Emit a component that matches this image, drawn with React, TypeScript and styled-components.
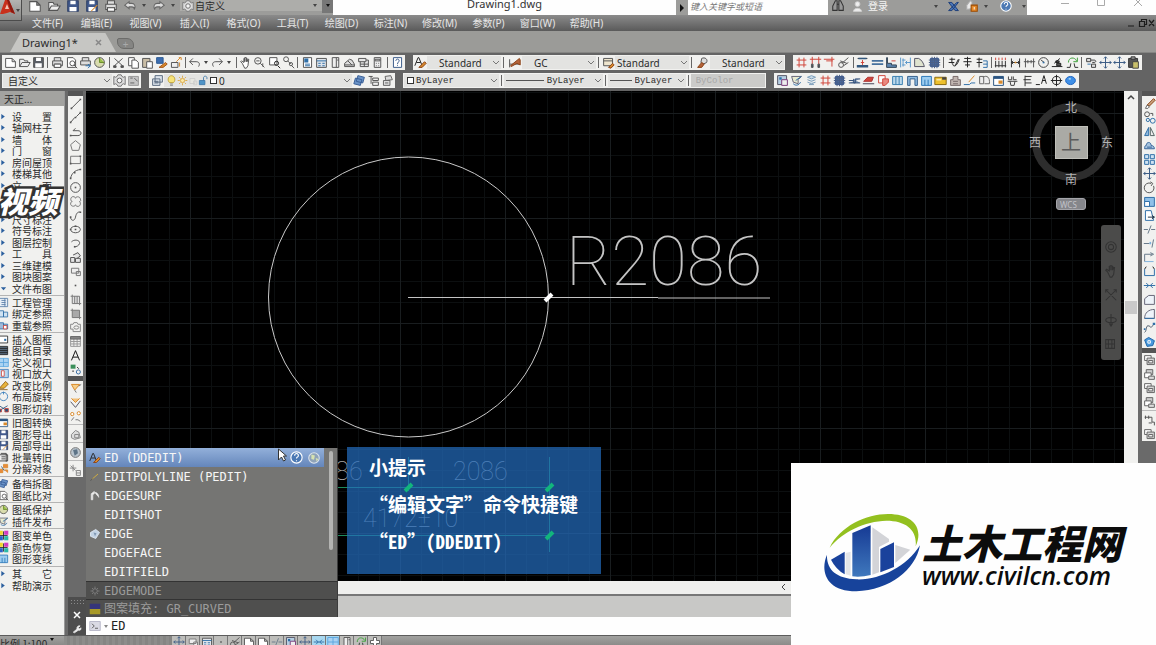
import React from "react";
import styled, { createGlobalStyle, css } from "styled-components";

const UI = `"Noto Sans", "Noto Sans CJK SC", sans-serif`;
const CJK = `"Noto Sans CJK SC", "Noto Sans", sans-serif`;
const MONO = `"Noto Sans Mono CJK SC", "Noto Sans CJK SC", monospace`;
const CODE = `"DejaVu Sans Mono", "Noto Sans CJK SC", monospace`;

const Global = createGlobalStyle`
  * { box-sizing: border-box; }
  html, body { margin: 0; background: #646464; }
  body { font-family: ${UI}; color: #2b2b2b; overflow: hidden; }
  button, input, select { font: inherit; color: inherit; border: 0; padding: 0; margin: 0; background: none; border-radius: 0; }
  ul { list-style: none; margin: 0; padding: 0; }
`;

/* ---------- icons: [path, stroke, fill] on a 16 x 16 grid ---------- */

type Shape = [string, string, string?];
const K = "#555";
const B = "#2f6fa8";
const L = "#7fb2dc";
const R = "#d0453a";
const O = "#d98a2b";
const N = "none";

const icons: Record<string, Shape[]> = {
  new: [["M2 3h8l4 4v7H2zM10 3v4h4", K, "#fff"]],
  open: [["M2 13V4h5l1 2h4v2M2 13l3-5h10l-3 5z", K, "#eee"]],
  save: [["M2 2h12v12H2z", K, "#5b5f66"], ["M5 2h6v4H5zM4 9h8v5H4z", N, "#fff"]],
  saveBlue: [["M2 2h12v12H2z", "#2d3f66", "#41598c"], ["M5 2h6v4H5zM4 9h8v5H4z", N, "#fff"]],
  saveAs: [["M2 2h12v12H2z", "#2d3f66", "#41598c"], ["M5 2h6v4H5zM4 9h8v5H4z", N, "#fff"], ["M7 14l7-7", O]],
  print: [["M4 6V2h8v4M2 6h12v6H2zM4 10h8v4H4z", K, "#ddd"], ["M4 10h8v4H4z", K, "#fff"]],
  preview: [["M3 2h7l3 3v9H3z", K, "#fff"], ["M6 9a3 3 0 1 0 6 0a3 3 0 1 0-6 0M11 11l4 4", K]],
  publish: [["M4 6V2h8v4M2 6h12v5H2z", K, "#ddd"], ["M8 12h6M11 10l3 2-3 3", B]],
  globe: [["M2 8a6 6 0 1 0 12 0a6 6 0 1 0-12 0", K, "#d9dcae"], ["M8 2v6h6", "#6c8f2c", "#9abf4a"]],
  cut: [["M3 3l10 9M13 3L3 12", K], ["M2 12h3v2H2zM11 12h3v2h-3z", K, K]],
  copy: [["M2 2h7v10H2z", K, "#fff"], ["M6 5h5l3 3v7H6z", K, "#fff"]],
  paste: [["M2 3h9v11H2z", K, "#c9bda5"], ["M7 7h7v8H7z", K, "#fff"]],
  pasteBlack: [["M2 3h11v11H2z", "#333", "#555"], ["M5 1h5v3H5z", "#333", "#999"], ["M7 7h7v8H7z", "#444", "#c9c06a"]],
  match: [["M2 2h8v7H2z", "#2d5a94", "#3c6db0"], ["M5 14l8-6 2 2-5 4z", "#a4561e", O]],
  block: [["M3 8h8v6H3z", K, "#eee"], ["M9 7l5-5M12 2h3v3M13 8v5", O]],
  undo: [["M6 3L2 7l4 4M2 7h8c4 0 5 3 3 6", K]],
  redo: [["M10 3l4 4-4 4M14 7H6c-4 0-5 3-3 6", K]],
  undoTop: [["M7 3L2 7l5 4V9h3c2 0 3 1 3 3c2-4 0-7-3-7H7z", "#666", "#ddd"]],
  redoTop: [["M9 3l5 4-5 4V9H6c-2 0-3 1-3 3C1 8 3 5 6 5h3z", "#666", "#ddd"]],
  hand: [["M4 9L2 7l1-1 3 2V3h1v4V2h2v5-4h1v4l1-3h1l-1 8-2 3H7z", K, "#fff"]],
  zoom: [["M2 6a4 4 0 1 0 8 0a4 4 0 1 0-8 0M9 9l5 5M4 6h4M12 9v4", K]],
  zoomWin: [["M2 2h9v9H2z", K, "#fff"], ["M8 9a2 2 0 1 0 5 0a2 2 0 1 0-5 0M12 12l3 3", "#222"]],
  zoomPrev: [["M2 4a3 3 0 1 0 6 0a3 3 0 1 0-6 0M7 6l4 4M9 10a2 2 0 1 0 4 0a2 2 0 1 0-4 0M12 12l3 3", K]],
  props: [["M3 2h10v12H3z", K, "#fff"], ["M4 3h5v5H4z", N, B], ["M5 10h6M5 12h6", B]],
  center: [["M2 3h12v11H2z", K, "#dfe4ea"], ["M2 6h12M4 9h3M9 9h3M4 12h3M9 12h3", B]],
  palette: [["M4 2h8v12H4zM9 2v12M10 5h2", K, "#eee"]],
  sheet: [["M2 9l6-5 3 1 3 5v3H2zM2 11h12M6 6l5 5", K, "#ddd"]],
  markup: [["M2 3h9v4H2zM4 7v6h10V5h-3M4 10h10M9 7v6", K, "#e6e6e6"]],
  calc: [["M4 2h8v12H4z", K, "#eee"], ["M5 4h6v2H5zM6 9h1M9 9h1M6 12h1M9 12h1", K]],
  help: [["M3 2h10v12H3z", "#3b5c8a", "#fff"], ["M6 6c0-3 4-3 4 0c0 2-2 1-2 4M8 11v1", "#3b5c8a"]],
  textStyle: [["M1 12L5 2h1l4 10M3 8h5", "#222"], ["M6 14l7-7 2 2-5 5z", "#8a4318", O]],
  dimStyle: [["M2 4v10M2 10h12", K], ["M3 12L14 3l1 2v6l-4-2-7 4z", "#8a4318", "#b5633a"]],
  tableStyle: [["M2 3h11v9H2zM2 6h11", K, "#efe6cf"], ["M8 14l5-5 2 2-4 4z", "#8a4318", O]],
  leader: [["M7 3c4-2 8 1 6 5l-4 2-3-2z", K, "#ddd"], ["M2 14l5-6 3 2-3 4z", "#8a4318", "#b5633a"]],
  gear: [["M6 1h4l1 2 2 1 2-1v10l-2-1-2 1-1 2H6l-1-2-2-1-2 1V3l2 1 2-1z", "#777", "#ddd"], ["M5 8a3 3 0 1 0 6 0a3 3 0 1 0-6 0", "#666", "#f4f4f4"]],
  save2: [["M2 3h12v11H2z", "#999", "#c6c6c6"], ["M4 5h3M9 5l4 4M4 11h5", "#666"]],
  layers: [["M5 2h9v8H5zM2 6h9v8H2zM4 9h5M4 11h5", "#5a6b80", "#dbe3ec"]],
  layersB: [["M6 2l8 2-2 7-8-2zM3 5l8 2-2 7-8-2z", "#3a5f96", "#6a93c7"]],
  layerPrev: [["M2 3h5M5 3v9M7 5h7v3H7zM7 10h7v4H7z", K, "#eee"]],
  layerState: [["M5 3l7-1 2 5-8 1zM3 8h8v6H3zM5 11h4", "#666", "#ddd"]],
  bulb: [["M5 11C1 7 4 1 8 1s7 6 3 10z", "#b99a2a", "#f6e27a"], ["M6 13h4M6 15h4", "#777"]],
  sun: [["M5 8a3 3 0 1 0 6 0a3 3 0 1 0-6 0M8 1v3M8 12v3M1 8h3M12 8h3M3 3l2 2M11 11l2 2M13 3l-2 2M3 13l2-2", "#d9a233", "#fbe9a8"]],
  sunPage: [["M3 4h8v8H3zM9 8h5v6H9z", "#c9c9c9", "#e6e6e0"]],
  lock: [["M2 8h8v6H2z", "#3a76a8", "#4f94c7"], ["M8 8V4c0-3 5-3 5 0v2", "#3a76a8"]],
  grid: [["M5 2v12M11 2v12M2 5h12M2 11h12", R]],
  columns: [["M1 4h14M4 1v9M12 1v9", R], ["M3 10h2v4H3zM11 10h2v4h-2z", K, "#456"]],
  axisT: [["M1 4h13M11 1v12M4 6h8", R]],
  link: [["M2 11a3 3 0 1 0 6 0a3 3 0 1 0-6 0M6 9l8-7M8 12l6-4M4 6l8 3", K]],
  wallI: [["M2 3h12", "#333"], ["M8 5v6M6 8h4", R], ["M1 11h14v3H1zM3 2h10v2H3z", N, "#33587e"]],
  wallE: [["M1 5h14v2H1zM1 9h14v2H1z", N, "#46719e"]],
  stairs: [["M3 2v7h5v2h6v3H2V2z", "#345", "#5d86b0"], ["M8 6h5", R]],
  door: [["M2 2v12M14 2v12M4 5h4M4 11h4M8 8h6M10 6L8 8l2 2M5 3v10", "#5b98ca"]],
  arc: [["M2 13V3h5c4 2 6 6 7 10z", "#556", "#dfe3cf"]],
  hatchSq: [["M3 3h10v10H3z", "#34558f", "#46679c"], ["M5 1v14M8 1v14M11 1v14M1 5h14M1 8h14M1 11h14", "#4a5f86"]],
  dimA: [["M3 4h7M6 2v7M2 8h7M7 9c0 5 5 5 8-5M10 12l4-8", "#222"]],
  dimB: [["M4 3h8M8 1v13M3 7h10M5 11h6", "#222"]],
  dimC: [["M2 4h7M5 2v12M2 8h7", "#222"], ["M10 6h5v8h-5M10 10h5", B]],
  dimV: [["M2 6v8M6 6v8M10 6v8M14 6v8M1 12h14", "#333"], ["M2 2v3M6 2v3M10 2v3M14 2v3", R]],
  dimH: [["M3 3v11M13 3v11M3 8h10M5 6L3 8l2 2M11 6l2 2-2 2", "#333"], ["M7 7h2v2H7z", N, O]],
  dimG: [["M3 3v11M13 3v11M1 7h14M6 5v4M10 5v4", "#555"]],
  radius: [["M2 8a6 6 0 1 0 12 0a6 6 0 1 0-12 0M5 5l4 3", "#444"], ["M7 7h2v2H7z", N, B]],
  levelMk: [["M1 13h13M4 9l7-6M6 6h4v2H6zM7 9h5v3H7z", "#222", "#555"]],
  section: [["M1 14h4L6 9M15 14h-4l-1-5", "#333"], ["M3 8c0-7 8-7 10-2M14 2v5h-5", "#3ea03a"]],
  gears: [["M2 3h5v4H2zM7 5h4c3 0 3 3 0 3H9M8 10h5v4H8z", "#444", "#ddd"], ["M3 10h4", B]],
  cross: [["M8 1v14M1 8h14M6 3l2-2 2 2M6 13l2 2 2-2M3 6L1 8l2 2M13 6l2 2-2 2", "#3a5a84"]],
  img: [["M2 2h11v11H2z", "#556", "#b7cfe2"], ["M7 7h7v7H7z", "#7a3a7a", "#eee"], ["M4 4h3v3H4z", N, B]],
  edit: [["M2 3h12l-4 4v5l-6-2z", "#667", "#e8ead0"], ["M4 12c3 3 7 2 9-2M7 8l7-5", B]],
  cubes: [["M3 4l5-2 5 2-5 2zM3 7l5 2 5-2M3 10l5 2 5-2M5 13h6", "#7b9dba", "#c9dbe8"]],
  wallH: [["M1 8h6M1 11h8V6h6M7 6v5h8", "#33507a", "#7f97b5"]],
  redCar: [["M3 8l4-4h7l-2 5H2z", "#a33", R], ["M1 12h14", "#445", R]],
  redDoor: [["M2 2h8v9H2z", R, "#fff"], ["M7 6h7v4l-4 4H7z", R, "#e98a80"]],
  blueWin: [["M2 3h12v10H2zM6 3v10M10 3v10", "#3a7fb0", "#bcd9ec"]],
  blueN: [["M2 14V3h12v11h-3V6H5v8z", "#36608c", "#8fbbe0"]],
  blueM: [["M2 14V3h12v11zM6 7v7M10 7v7", "#2d78b8", "#9dcdf0"]],
  folder: [["M1 4h14v9H1z", "#8a6a10", "#edc02c"], ["M3 6h6v2H3z", N, "#fbe9a8"], ["M10 4h5v3h-5z", N, "#444"]],
  house: [["M2 14V7h3V3h6v4h3v7zM5 9h6M5 12h6", "#776a6a", "#c2b7b2"]],
  line: [["M3 14L14 3", K], ["M2 13h2v2H2zM13 2h2v2h-2z", N, K]],
  blueLine: [["M1 13h7l2-2h5", "#2f6fa8"], ["M7 10l7-8", O]],
  pages: [["M2 3h5v9H2zM6 4c5-3 9 0 8 8H8", "#666", "#eee"]],
  table: [["M2 3h12v11H2z", "#28527f", "#fff"], ["M2 3h12v3H2z", N, "#28527f"], ["M8 8h5v4H8z", N, O]],
  text2: [["M3 3v4h4V3M9 3v4h4M2 9h12M5 9l1 5h4l1-5", "#444"]],
  flagE: [["M5 2v13M5 3h8M3 7h9M5 11h8", "#333"]],
  triA: [["M1 13h5M8 12l3-10 3 10M9 8h4", "#222"]],
  target: [["M3 8a5 5 0 1 0 10 0a5 5 0 1 0-10 0M8 1v14M1 8h14", "#222"]],
  ball: [["M2 8a6 5 0 1 0 12 0a6 5 0 1 0-12 0", "#1f66c0", "#3f8fe6"], ["M5 6l3-1v2z", N, "#dff"]],
  cline: [["M2 14l5-6M9 7l5-5", K], ["M1 13h2v2H1zM7 7h2v2H7zM13 1h2v2h-2z", N, K]],
  pline: [["M2 13h9c5 0 5-6 0-6H5M8 4L5 7", K], ["M1 12h2v2H1z", N, K]],
  pentagon: [["M8 2l6 5-2 7H4L2 7z", "#777"]],
  rect: [["M2 4h12v9H2z", "#777"], ["M1 12h2v2H1zM13 3h2v2h-2z", N, K]],
  arcLine: [["M2 14C3 8 7 4 14 3", K], ["M1 13h2v2H1zM6 6h2v2H6zM13 2h2v2h-2z", N, K]],
  circle: [["M2 8a6 6 0 1 0 12 0a6 6 0 1 0-12 0", K], ["M7 7h2v2H7z", N, K]],
  cloud: [["M8 4c1-3 6-2 6 1c1 2 0 3-1 3c2 2 1 6-2 6c-2 0-3-1-3-2c-1 3-6 2-6-1c0-2 1-3 2-3c-3-1-2-6 1-6c2 0 3 1 3 2z", "#777"]],
  spline: [["M2 11c1 4 5 4 6-1s3-7 6-6", K], ["M1 9h2v2H1zM13 3h2v2h-2z", N, K]],
  ellipse: [["M2 8a6 4 0 1 0 12 0a6 4 0 1 0-12 0", K], ["M7 7h2v2H7zM1 7h2v2H1zM7 3h2v2H7z", N, K]],
  ellArc: [["M3 6c4-4 11-2 10 2c-1 3-4 4-6 4", K], ["M6 11h2v2H6z", N, K]],
  insert: [["M2 8h5v6H2zM5 5l6-3 3 4-4 3M8 9h6v5H8z", K, "#e4e4e4"]],
  makeBlk: [["M3 4h9v6H3zM9 8h5v5H9z", "#777", "#eee"]],
  dot: [["M7 7h2v2H7z", N, K]],
  hatch: [["M4 4h9v9H4z", "#777", "#e2e2e2"], ["M2 4h2M4 2v2M13 13h2M13 13v2M7 4v9M10 4v9", "#777"]],
  gradient: [["M4 4h9v9H4z", "#777", "#a9a9a9"], ["M2 4h2M4 2v2M13 13h2M13 13v2", "#777"]],
  region: [["M2 4h3l1-2h4l1 2h3v9H5v-3H2zM6 8a3 2 0 1 0 6 0a3 2 0 1 0-6 0", "#888"]],
  tbl: [["M2 2h12v12H2zM2 8h12M6 4v10M10 4v10M2 11h12", "#999"], ["M2 2h12v3H2z", "#666", "#888"]],
  bigA: [["M3 14L8 2l5 12M5 10h6", "#111"]],
  points: [["M2 2h6v5H2z", N, "#3b8f5a"], ["M9 11a2 2 0 1 0 5 0a2 2 0 1 0-5 0", "#3a6ea5"], ["M4 10h2M10 5l2 2", "#222"]],
  lampA: [["M3 3h10L7 10z", O, "#f6cf8a"], ["M7 10l2 3M12 5l3-2", "#777"]],
  lampB: [["M3 3l5 5 5-5", O, "#f2c079"], ["M2 7l6 7 6-8", "#556"]],
  lampC: [["M2 5a2 2 0 1 0 4 0a2 2 0 1 0-4 0M10 4a2 2 0 1 0 4 0a2 2 0 1 0-4 0", O, "#fff"], ["M6 9l-3 4M8 12h3l3 2", "#777"]],
  greyBall: [["M3 8l5-5 4 2 2 7-7 2-4-2zM7 8h5v4H7z", "#888", "#ddd"]],
  world: [["M2 8a6 6 0 1 0 12 0a6 6 0 1 0-12 0", "#777", "#b9c4cd"], ["M5 5l5-1 1 5-4 3z", N, "#5d7487"]],
  sunBox: [["M5 1v8M1 5h8M2 2l6 6M9 8h5v6H9zM9 11h5", "#888"]],
  eraser: [["M5 10L13 2l2 2-7 7z", "#8a4318", "#c9a27c"], ["M5 10l3 2-2 2H3z", "#666", "#fff"]],
  copy2: [["M2 4a3 3 0 1 0 6 0a3 3 0 1 0-6 0M9 3h3v3", K], ["M4 11a2 2 0 1 0 4 0a2 2 0 1 0-4 0M9 12a3 3 0 1 0 6 0a3 3 0 1 0-6 0", B]],
  mirror: [["M7 3v10H2z", B, "#8db8de"], ["M9 3v10h5z", "#566", "#eee"]],
  offset: [["M2 12h12c0-3-2-4-4-4c0-5-6-5-6 0C2 8 2 10 2 12zM5 10h6", "#35659a", "#a4c2de"]],
  array: [["M2 2h5v5H2zM9 2h5v5H9zM2 9h5v5H2zM9 9h5v5H9z", B, "#cfe2f2"]],
  rotate: [["M10 3a6 6 0 1 0 3 3M9 1l3 2-2 3", K]],
  scale: [["M2 3h12v11H2z", B, "#8fc0e8"], ["M2 8h6v6H2z", B, "#fff"]],
  stretch: [["M3 2h7l3 12H3z", B, "#fff"], ["M6 10h8M11 8l3 2-3 2", "#234"]],
  trim: [["M1 8h5M10 8h5M6 13l4-10", "#678"]],
  extend: [["M1 8h7M11 13l2-10", "#678"], ["M8 6h2v3H8z", N, L]],
  brk: [["M2 13V4h9M9 2l4 2-4 2", "#678"], ["M2 13h11", L]],
  join: [["M2 5v8h12V5", B], ["M4 2l-2 3M12 2l2 3", "#222"]],
  joinH: [["M1 8h14M4 5l3 3-3 3M12 5L9 8l3 3", B]],
  chamfer: [["M2 14V7l5-4h7v11z", "#667", "#eef4fa"]],
  fillet: [["M2 14C2 7 7 3 14 3v11z", "#667", "#eef4fa"], ["M2 14h12", B]],
  blend: [["M2 14c3-2 1-9 5-8s1 5 7-3", "#456"], ["M1 9h2v2H1zM12 2h3v3h-3z", N, B]],
  explode: [["M2 6l5-3 7 4-2 6-7 1z", "#1f66a8", "#4a9ade"], ["M6 7h3v3H6z", "#fff"]],
  order: [["M2 2h8v6H2z", "#666", "#fff"], ["M5 5h9v8H5z", "#666", "#d6d6d6"], ["M7 8h5v3H7z", "#666", "#eee"]],
  order2: [["M4 2h8v6H4z", "#666", "#ccc"], ["M2 6h8v6H2z", "#666", "#fff"], ["M7 10h7v4H7z", "#666", "#ddd"]],
  orderT: [["M2 4h9M3 2v4M7 2v4M11 4v6h3v4M7 11h4", "#555"]],
  binoc: [["M2 13V8l3-6h2v11zM9 13V2h2l3 6v5zM7 6h2", "#333", "#999"]],
  user: [["M5 5a3 3 0 1 0 6 0a3 3 0 1 0-6 0M3 14c0-5 10-5 10 0z", "#ccc", "#eee"]],
  xmark: [["M2 3h4l8 10h-4zM12 3h2L6 13H2z", "#1e3f7a", "#4a76b8"]],
  handLock: [["M2 12V7l4-5 2 1v8z", "#aaa", "#e9e9e9"], ["M7 7h7v7H7z", "#9a4a00", "#e58a2a"], ["M10 9h1v3h-1z", N, "#fff"]],
  helpBlue: [["M2 8a6 6 0 1 0 12 0a6 6 0 1 0-12 0", "#fff", "#4c79b4"], ["M6 6c0-3 4-3 4 0c0 2-2 1-2 3M8 11v1", "#fff"]],
  globeList: [["M2 8a6 6 0 1 0 12 0a6 6 0 1 0-12 0", "#dde4ec", "#8fa3b8"], ["M5 4l4 1-1 5-3-1zM10 8l3 1-2 3z", N, "#d7e2b0"]],
  pencil: [["M4 11L12 4", "#d9b23a"], ["M2 13L5 10", "#555"]],
  surf: [["M3 13V5l4-3v3l-2 1v7zM7 3c4 0 6 3 6 7", "#ddd", "#f4f4f4"]],
  edge: [["M2 6l7-4 5 4-5 8-7-3z", "#dfe8f2", "#c3d3e4"], ["M6 6l4 1-2 4z", N, "#7f97b2"]],
  gearDark: [["M8 2v12M2 8h12M4 4l8 8M12 4l-8 8", "#7d7d7d"], ["M5 8a3 3 0 1 0 6 0a3 3 0 1 0-6 0", "#7d7d7d", "#4e4e4e"]],
  gradSw: [["M1 1h14v7H1z", N, "#35357a"], ["M1 8h14v7H1z", N, "#a89a28"]],
  prompt: [["M1 2h14v12H1z", "#b6b6c6", "#dadae4"], ["M4 5l3 3-3 3M8 11h4", "#555"]],
  wrench: [["M13 3a4 4 0 0 0-5 5l-6 5 2 1 6-4c4 1 5-2 4-4l-2 2-2-2z", "#eee", "#eee"]],
  navWheel: [["M2 8a6 6 0 1 0 12 0a6 6 0 1 0-12 0M5 8a3 3 0 1 0 6 0a3 3 0 1 0-6 0", "#333"]],
  navHand: [["M4 9L2 7l1-1 3 2V3h1v4V2h2v5-4h1v4l1-3h1l-1 8-2 3H7z", "#333"]],
  navZoom: [["M2 2l12 12M14 2L2 14M5 2H2v3M11 2h3v3", "#333"]],
  navOrbit: [["M2 8a6 3 0 1 0 12 0a6 3 0 1 0-12 0M8 1v14M6 12l2 3 2-3", "#333"]],
  navFilm: [["M2 3h10v10H2zM5 3v10M9 3v10M2 8h10", "#333"]],
  plus: [["M6 2h4v4h4v4h-4v4H6v-4H2V6h4z", "#555", "#fff"]],
  triList: [["M3 2l8 6-8 6z", N, "#2b5f9e"]],
  triDown: [["M2 5h12l-6 7z", N, "#2b5f9e"]],
  listA: [["M2 2h12v12H2zM5 5h6M5 8h6M5 11h6M10 2v12", "#557ba5", "#e6eef6"]],
  listB: [["M2 4h6v9H2zM8 6h6v7H8z", B, "#cfe2f2"]],
  listC: [["M2 4h6v9H2zM8 6h6v7H8z", B, "#9fb8d8"], ["M8 8h5v5H8z", R, "#fff"]],
  frame: [["M1 3h13v10H1z", "#222", "#fff"], ["M9 7h3v3H9z", N, B]],
  book: [["M1 2h13v12H1zM1 5h13M1 8h13M1 11h13", "#222", "#567"]],
  view: [["M1 2h14v12H1zM1 8h14M8 2v12", "#5aa5de", "#a9d2f2"]],
  viewR: [["M1 2h14v12H1z", "#3b78b8", "#b7d6ee"], ["M5 4h4v8H5z", R, "#fff"]],
  pen: [["M2 12l9-10 4 4-6 6zM1 14h13", "#8a5a10", "#e8b33a"]],
  ring: [["M2 8a6 6 0 1 0 12 0a6 6 0 1 0-12 0M8 1v4", "#2f78b8"]],
  scissors: [["M2 4l9 6M2 11l12-7", "#26517d"], ["M10 8h5v5h-5zM1 9h4v4H1z", R, "#26517d"]],
  stamp: [["M2 4h12v9H2zM4 2h8v12M5 7h6M5 10h6", "#333", "#eee"]],
  puzzle: [["M2 9h5v5H2zM8 2h6v5H8zM9 10h5v4", O, "#e98a3a"], ["M5 5l4 6", "#26517d"]],
  colors: [["M1 1h6v6H1z", N, "#f2d52a"], ["M9 1h6v6H9z", N, "#d23cc0"], ["M1 9h6v6H1z", N, "#2a62c8"], ["M9 9h6v6H9z", N, "#2ab8a8"], ["M8 2v12M2 8h12", "#222"]],
};

const Svg = styled.svg<{ $s: number }>`
  display: block;
  flex: none;
  width: ${(p) => p.$s}px;
  height: ${(p) => p.$s}px;
`;
const Icon = ({ n, s = 12 }: { n: string; s?: number }) => (
  <Svg $s={s} viewBox="0 0 16 16" aria-hidden="true">
    {icons[n].map(([d, stroke, fill], i) => (
      <path key={i} d={d} stroke={stroke} fill={fill ?? "none"} strokeWidth={1.2} />
    ))}
  </Svg>
);

/* ---------- frame ---------- */

const Page = styled.div`
  display: flex;
  flex-direction: column;
  height: 100vh;
  position: relative;
  overflow: hidden;
`;

const TitleBar = styled.header`
  display: flex;
  height: 15px;
  background: #fefefe;
`;
const AppSlot = styled.div`
  width: 22px;
  position: relative;
  background: #8d8d8b;
`;
const AppButton = styled.button`
  position: absolute;
  z-index: 2;
  top: 0;
  left: 0;
  width: 22px;
  height: 21px;
  display: flex;
  align-items: center;
  background: linear-gradient(#b4b4b2, #8a8a88);
  border-right: 1px solid #4c4c4c;
  border-bottom: 1px solid #4c4c4c;
`;
const Gray = styled.div<{ $w: number }>`
  display: flex;
  align-items: center;
  width: ${(p) => p.$w}px;
  background: #9c9c9a;
  overflow: hidden;
`;
const QuickAccess = styled(Gray)`
  padding-left: 3px;
  padding-bottom: 4px;
`;
const Tool = styled.button<{ $w?: number }>`
  display: flex;
  align-items: center;
  justify-content: center;
  height: 14px;
  min-width: 0;
  overflow: hidden;
  ${(p) => (p.$w ? css`width: ${p.$w}px; flex: none;` : css`flex: 1 1 0;`)}
`;
const Caret = styled.span<{ $c?: string }>`
  width: 0;
  border: 2px solid transparent;
  border-top: 3px solid ${(p) => p.$c ?? "#444"};
  border-bottom: 0;
`;
const Workspace = styled.label`
  flex: 1;
  display: flex;
  align-items: center;
  gap: 1px;
  height: 100%;
  margin-left: 2px;
  padding: 0 5px 0 2px;
  background: #adadaa;
  font: 10px/11px ${CJK};
  select { appearance: none; flex: 1; height: 12px; }
`;
const More = styled(Tool)`background: #777;`;
const FileName = styled.h1`
  flex: 1;
  margin: 0;
  text-align: center;
  font: 11px/7px ${UI};
  color: #333;
`;
const Search = styled.input`
  width: 140px;
  background: #fefefe;
  font: italic 9px/12px ${CJK};
  padding: 0 2px 2px;
  &::placeholder { color: #777; opacity: 1; }
`;
const Account = styled(Gray)`
  padding-bottom: 3px;
  color: #f4f4f4;
  font: 10px/12px ${CJK};
`;
const Sign = styled.button`
  width: 22px;
  margin-right: 40px;
  white-space: nowrap;
`;
const WinButtons = styled.div`
  display: flex;
  align-items: center;
  justify-content: space-around;
  width: 129px;
  padding: 0 0 8px 20px;
`;

const MenuBar = styled.nav`
  display: flex;
  align-items: center;
  height: 16px;
  padding: 0 1px 0 23px;
  background: linear-gradient(#8b8b8b, #5a5a5a);
  color: #e6e6e6;
  font: 10px/14px ${UI};
`;
const MenuItem = styled.button`
  width: 49px;
  text-align: center;
  white-space: nowrap;
  flex: none;
`;
const Push = styled.span`flex: 1;`;

const TabBar = styled.div`
  display: flex;
  align-items: flex-end;
  height: 22px;
  background: #9b9b98;
  padding-left: 8px;
  border-bottom: 1px solid #858583;
`;
const Tab = styled.div`
  position: relative;
  z-index: 0;
  display: flex;
  align-items: center;
  justify-content: space-between;
  width: 108px;
  height: 19px;
  padding: 0 14px;
  font: 11px/18px ${UI};
  &::before {
    content: "";
    position: absolute;
    z-index: -1;
    inset: 0 0 0 2px;
    border-radius: 7px 8px 0 0;
    background: #c6c6c3;
    clip-path: polygon(0 100%, 10% 0, 90% 0, 100% 100%);
  }
`;
const NewTab = styled.button`
  width: 17px;
  height: 11px;
  margin: 0 0 3px 1px;
  border: 1px solid #6c6c6a;
  border-radius: 2px 7px 2px 7px;
  background: #858583;
  color: #aaa;
  font: 10px/8px ${UI};
`;

const ToolArea = styled.div`
  background: #646464;
  padding: 2px 0 3px 2px;
  display: flex;
  flex-direction: column;
  gap: 3px;
`;
const ToolRow = styled.div`display: flex; gap: 8px;`;
const Bar = styled.div<{ $w: number }>`
  display: flex;
  align-items: center;
  flex: none;
  width: ${(p) => p.$w}px;
  height: 15px;
  padding: 0 1px;
  background: #f1f1ef;
`;
const Sep = styled.span`
  flex: none;
  width: 1px;
  height: 11px;
  margin: 0 2px;
  background: #666;
`;
const Combo = styled.span<{ $dim?: boolean; $mono?: boolean; $g?: number }>`
  position: relative;
  flex: ${(p) => p.$g ?? 1} 1 0;
  display: flex;
  align-items: center;
  height: 13px;
  padding-left: 2px;
  background: ${(p) => (p.$dim ? "#cbcbc9" : "#e3e3e1")};
  color: ${(p) => (p.$dim ? "#999" : "#2b2b2b")};
  font: ${(p) => (p.$mono ? `9px/12px "Liberation Mono", monospace` : `10px/12px ${UI}`)};
`;
const Select = styled.select<{ $pad?: number }>`
  appearance: none;
  flex: 1;
  min-width: 0;
  height: 13px;
  padding-left: ${(p) => p.$pad ?? 0}px;
`;
const ChevronMark = styled.svg`flex: none;`;
const Chevron = () => (
  <ChevronMark width="9" height="9" viewBox="0 0 9 9" aria-hidden="true">
    <path d="M1 3l3 3 3-3" fill="none" stroke="#777" />
  </ChevronMark>
);
const Rule = styled.span<{ $w: number }>`
  width: ${(p) => p.$w}px;
  flex: none;
  height: 1px;
  margin-right: 3px;
  background: #555;
`;
const Swatch = styled.span`
  width: 7px;
  height: 7px;
  margin: 0 2px 0 1px;
  border: 1px solid #333;
  background: #fff;
`;

/* ---------- workspace ---------- */

const Main = styled.main`
  flex: 1;
  min-height: 0;
  display: flex;
`;
const Palette = styled.aside`
  position: relative;
  width: 65px;
  flex: none;
  background: #f1f1ef;
  border-right: 1px solid #999;
  overflow: hidden;
  font: 10px/11px ${CJK};
`;
const PaletteHead = styled.h2`
  margin: 0 0 5px;
  height: 15px;
  padding-left: 4px;
  background: #a3a3a0;
  font: 10px/15px ${CJK};
`;
const Group = styled.ul<{ $h: number }>`
  display: grid;
  grid-auto-rows: 1fr;
  height: ${(p) => p.$h}px;
  & + & { border-top: 1px solid #b4b4b4; margin-top: 1px; padding-top: 1px; box-sizing: content-box; }
`;
const Entry = styled.button`
  display: flex;
  align-items: center;
  width: 100%;
  height: 11px;
  gap: 3px;
`;
const Mark = styled.span`
  width: 9px;
  display: flex;
  flex: none;
  justify-content: flex-end;
  overflow: hidden;
`;
const ArrowMark = styled(Mark)`justify-content: flex-start;`;
const Name = styled.span`
  width: 40px;
  display: flex;
  justify-content: space-between;
  white-space: nowrap;
`;
const Watermark = styled.div`
  position: absolute;
  left: -2px;
  top: 91px;
  font: italic 900 30px/36px ${CJK};
  color: #fff;
  -webkit-text-stroke: 5px #333;
  paint-order: stroke fill;
  white-space: nowrap;
`;

const Side = styled.div<{ $w: number }>`
  width: ${(p) => p.$w}px;
  flex: none;
  display: flex;
  flex-direction: column;
  padding: 0 3px 0 3px;
  background: #6a6a6a;
`;
const SideRight = styled(Side)`padding: 0 0 0 4px;`;
const Grip = styled.span`
  flex: none;
  height: 5px;
  background: #555;
`;
const Strip = styled.div`
  display: flex;
  flex-direction: column;
  background: #f1f1ef;
  & > button { flex: none; width: 100%; }
`;
const SideSep = styled.span`height: 1px; margin: 1px 0 2px; background: #bbb;`;
const CmdHandle = styled.div`
  margin: auto 0 0 0;
  width: 18px;
  height: 38px;
  background: #4d4d4d;
  display: flex;
  flex-direction: column;
  align-items: center;
  justify-content: space-between;
  padding-bottom: 1px;
`;
const Dots = styled.span`
  width: 14px;
  height: 7px;
  margin-top: 2px;
  background: radial-gradient(#8a8a8a 1px, transparent 1px) 0 0 / 3px 3px;
`;

const Centre = styled.section`
  flex: 1;
  min-width: 0;
  position: relative;
  display: flex;
  flex-direction: column;
`;
const View = styled.div`
  flex: 1;
  display: flex;
  min-height: 0;
`;
const Canvas = styled.div`
  flex: 1;
  position: relative;
  background: #000;
  overflow: hidden;
`;
const Drawing = styled.svg`
  position: absolute;
  inset: 0;
  width: 100%;
  height: 100%;
`;
const VScroll = styled.div`
  width: 14px;
  background: #f1f1ef;
  display: flex;
  flex-direction: column;
  align-items: center;
`;
const Thumb = styled.span`
  width: 12px;
  height: 13px;
  margin-top: 198px;
  background: #c9c9c9;
`;
const HScroll = styled.div`
  height: 13px;
  background: #efefed;
  padding-left: 694px;
  font: 10px/12px ${UI};
`;
const History = styled.div`
  height: 23px;
  border-top: 2px solid #777;
  background: #c8c8c6;
`;
const Command = styled.label`
  display: flex;
  align-items: center;
  gap: 3px;
  height: 18px;
  padding-left: 3px;
  background: #fefefe;
  font: 12px/16px ${CODE};
  color: #222;
  input { flex: 1; outline: 0; height: 16px; }
`;

const Popup = styled.div`
  position: absolute;
  left: 0;
  bottom: 18px;
  width: 252px;
  background: #757573;
  border-right: 1px solid #3c3c3c;
  font: 12px/18px ${CODE};
  color: #f6f6f6;
`;
const Option = styled.li<{ $on?: boolean }>`
  display: flex;
  align-items: center;
  height: 19px;
  margin-right: 13px;
  padding: 0 3px;
  gap: 3px;
  white-space: nowrap;
  background: ${(p) => (p.$on ? "linear-gradient(#93b0da, #6486bb)" : "none")};
`;
const Blank = styled.span<{ $s: number }>`width: ${(p) => p.$s}px; flex: none;`;
const PopupBar = styled.span`
  position: absolute;
  right: 4px;
  top: 3px;
  width: 4px;
  height: 99px;
  border-radius: 2px;
  background: #b4b4b2;
`;
const DimOption = styled.div`
  display: flex;
  align-items: center;
  gap: 3px;
  height: 18px;
  padding: 0 3px;
  border-top: 1px solid #333;
  background: #4f4f4e;
  color: #9b9b9b;
`;
const Pointer = styled.svg`
  position: absolute;
  left: 191px;
  top: 0;
`;

const Tip = styled.div`
  position: absolute;
  left: 261px;
  top: 356px;
  width: 254px;
  height: 127px;
  padding: 8px 0 0 22px;
  background: rgba(36, 110, 192, 0.7);
  color: #fff;
  font: 700 19px/24px ${MONO};
  font-feature-settings: "hwid";
  text-spacing-trim: space-all;
  white-space: nowrap;
  p { margin: 0 0 13px 0; }
`;

const Cube = styled.div`
  position: absolute;
  right: 14px;
  top: 12px;
  width: 78px;
  height: 78px;
  border: 8px solid #2d2d2d;
  border-radius: 50%;
  display: grid;
  place-items: center;
`;
const Face = styled.button`
  width: 33px;
  height: 33px;
  background: #aaaaa5;
  color: #5b5b5b;
  font: 20px/30px ${CJK};
  border: 1px solid #c0c0ba;
`;
const Dir = styled.span<{ $x: number; $y: number }>`
  position: absolute;
  left: ${(p) => p.$x}px;
  top: ${(p) => p.$y}px;
  color: #b4b4b4;
  font: 12px/14px ${CJK};
`;
const Wcs = styled.button`
  position: absolute;
  right: 38px;
  top: 107px;
  width: 30px;
  height: 12px;
  padding-left: 3px;
  text-align: left;
  border-radius: 3px;
  border: 1px solid #a5a5aa;
  background: #85868b;
  color: #c2c2c8;
  font: 8px/9px ${UI};
`;
const NavBar = styled.div`
  position: absolute;
  right: 3px;
  top: 134px;
  width: 20px;
  height: 135px;
  border-radius: 3px;
  background: #4b4b4a;
  display: flex;
  flex-direction: column;
  align-items: center;
  justify-content: space-around;
  padding: 10px 0 4px;
`;

const Status = styled.footer`
  display: flex;
  flex: none;
  height: 10px;
  overflow: hidden;
  border-top: 1px solid #5c5c5c;
  background: linear-gradient(#a2a2a0, #8b8b89);
  font: 10px/12px ${CJK};
`;
const Scale = styled.button`
  display: flex;
  align-items: flex-start;
  width: 64px;
  height: 16px;
  padding-top: 2px;
  gap: 3px;
  white-space: nowrap;
`;
const Coords = styled.div`
  width: 108px;
  height: 10px;
  background: repeating-linear-gradient(90deg, #8d8d8b 0 3px, #858583 3px 6px);
`;
const StatusTool = styled.button<{ $on?: boolean }>`
  width: 14px;
  height: 14px;
  display: flex;
  justify-content: center;
  border-right: 1px solid #777;
  background: ${(p) => (p.$on ? "#a8d8f0" : "#bdbdba")};
`;

const Brand = styled.aside`
  position: absolute;
  z-index: 5;
  right: 0;
  bottom: 0;
  width: 365px;
  height: 182px;
  display: flex;
  align-items: center;
  gap: 1px;
  padding: 0 0 2px 32px;
  background: #fefefe;
  color: #0c0c0c;
`;
const BrandText = styled.div`
  white-space: nowrap;
  strong { display: block; font: italic 900 40px/40px ${CJK}; margin-top: 4px; }
  a { display: block; font: italic 600 25px/26px "Open Sans", sans-serif; color: inherit; text-decoration: none; }
`;

/* ---------- data ---------- */

const menus = ["文件(F)", "编辑(E)", "视图(V)", "插入(I)", "格式(O)", "工具(T)", "绘图(D)", "标注(N)", "修改(M)", "参数(P)", "窗口(W)", "帮助(H)"];

const rowOne = "new open save | print preview publish globe | cut copy paste match block | undo . redo . | hand zoom zoomWin zoomPrev | props center palette sheet markup calc | help";
const rowOneRight = "grid columns axisT link | wallI wallE stairs door arc hatchSq | dimA dimB dimC | dimV dimH dimG radius levelMk section | gears cross cross pasteBlack";
const rowTwoRight = "img edit cubes grid hatchSq wallH redCar redDoor blueWin blueN blueM folder house blueLine pages table text2 flagE triA target ball";
const drawTools = "line cline pline pentagon rect arcLine circle cloud spline ellipse ellArc insert makeBlk dot hatch gradient region tbl bigA points";
const lampTools = "lampA lampB lampC | greyBall | world | sunBox";
const modifyTools = "eraser copy2 mirror offset array cross rotate scale stretch trim extend brk join joinH chamfer fillet blend explode";
const orderTools = "order order2 order order2 | orderT order";

/* rows with an empty title are spacers under the video badge */
const groups: { h: number; items: [string, string][] }[] = [
  {
    h: 183,
    items: ["设 置", "轴网柱子", "墙 体", "门 窗", "房间屋顶", "楼梯其他", "立 面", "", "", "尺寸标注", "符号标注", "图层控制", "工 具", "三维建模", "图块图案", "文件布图"].map(
      (t, i) => [i === 15 ? "triDown" : "triList", t] as [string, string]
    ),
  },
  { h: 34, items: [["listA", "工程管理"], ["listB", "绑定参照"], ["listC", "重载参照"]] },
  { h: 80, items: [["frame", "插入图框"], ["book", "图纸目录"], ["view", "定义视口"], ["viewR", "视口放大"], ["pen", "改变比例"], ["ring", "布局旋转"], ["scissors", "图形切割"]] },
  { h: 58, items: [["table", "旧图转换"], ["saveBlue", "图形导出"], ["saveAs", "局部导出"], ["stamp", "批量转旧"], ["puzzle", "分解对象"]] },
  { h: 23, items: [["layersB", "备档拆图"], ["preview", "图纸比对"]] },
  { h: 23, items: [["globe", "图纸保护"], ["edit", "插件发布"]] },
  { h: 35, items: [["colors", "图变单色"], ["colors", "颜色恢复"], ["blueM", "图形变线"]] },
  { h: 23, items: [["triList", "其 它"], ["triList", "帮助演示"]] },
];

const options: [string, string][] = [
  ["textStyle", "ED (DDEDIT)"],
  ["pencil", "EDITPOLYLINE (PEDIT)"],
  ["surf", "EDGESURF"],
  ["", "EDITSHOT"],
  ["edge", "EDGE"],
  ["", "EDGEFACE"],
  ["", "EDITFIELD"],
];

/* ---------- pieces ---------- */

const Tools = ({ list, w }: { list: string; w?: number }) => (
  <>
    {list.split(" ").map((n, i) =>
      n === "|" ? (
        <Sep key={i} />
      ) : n === "." ? (
        <Tool key={i} $w={9} aria-label="more"><Caret /></Tool>
      ) : (
        <Tool key={i} $w={w} aria-label={n}><Icon n={n} s={13} /></Tool>
      )
    )}
  </>
);
const SideTools = ({ list }: { list: string }) => (
  <Strip>
    {list.split(" ").map((n, i) =>
      n === "|" ? <SideSep key={i} /> : <Tool key={i} $w={14} aria-label={n}><Icon n={n} s={13} /></Tool>
    )}
  </Strip>
);
const StyleCombo = ({ label, value, pad }: { label: string; value: string; pad: number }) => (
  <Combo>
    <Select aria-label={label} $pad={pad}><option>{value}</option></Select>
    <Chevron />
  </Combo>
);
const PaletteEntry = ({ icon, title }: { icon: string; title: string }) => {
  if (!title) return <li />;
  const arrow = icon.startsWith("tri");
  return (
    <li>
      <Entry>
        {arrow ? <ArrowMark><Icon n={icon} s={7} /></ArrowMark> : <Mark><Icon n={icon} s={11} /></Mark>}
        <Name>{title.split(" ").map((c) => <span key={c}>{c}</span>)}</Name>
      </Entry>
    </li>
  );
};

const CadDrawing = () => (
  <Drawing fontFamily="Roboto, sans-serif" fontWeight={100}>
    <defs>
      <pattern id="minor" width="21" height="21" x="-1" y="1" patternUnits="userSpaceOnUse">
        <path d="M0 .5H21M.5 0V21" stroke="#0c0f10" fill="none" />
      </pattern>
      <pattern id="major" width="105" height="105" x="-1" y="22" patternUnits="userSpaceOnUse">
        <path d="M0 .5H105M.5 0V105" stroke="#191d1f" fill="none" />
      </pattern>
    </defs>
    <rect width="100%" height="100%" fill="url(#minor)" />
    <rect width="100%" height="100%" fill="url(#major)" />
    <circle cx="322.5" cy="206" r="140" fill="none" stroke="#c9c9c9" />
    <path d="M322 206.5H572M572 207H684" stroke="#c4c4c4" />
    <path d="M459 210l7-7" stroke="#fff" strokeWidth="4" />
    <text x="480" y="194" fontSize="69" fill="#c4c4c4">R2086</text>
    <g stroke="#1c8a5c">
      <path d="M200 396.500H463M200 444.500H463M463.500 366V461M322.500 366V400" />
    </g>
    <g fill="#a8a8a8">
      <text x="222" y="389" fontSize="25">2086</text>
      <text x="367" y="389" fontSize="25">2086</text>
      <text x="277" y="436" fontSize="25">4172±10</text>
    </g>
  </Drawing>
);

const BrandMark = () => (
  <svg width="98" height="80" viewBox="100 160 294 240" aria-hidden="true">
    <defs>
      <linearGradient id="tower" x1="0" y1="0" x2="0" y2="1">
        <stop offset="0" stopColor="#163a94" />
        <stop offset="1" stopColor="#3f78bd" />
      </linearGradient>
    </defs>
    <path d="M120 264C150 200 230 163 295 163C370 163 403 205 378 260C383 212 350 183 290 183C225 185 160 215 120 264Z" fill="#93c01f" />
    <path d="M112 285C92 330 105 395 200 395C300 392 378 330 391 257C350 322 270 362 200 359C140 357 110 330 112 285Z" fill="#17439b" />
    <path d="M124 300L165 276V344Q138 328 124 300Z" fill="#1a429c" />
    <path d="M188 220L243 197V346Q215 353 188 350Z" fill="url(#tower)" />
    <path d="M272 268L313 248V322L272 338Z" fill="#1a429c" />
    <path d="M248 203L298 238V246L268 262V338L248 345Z" fill="#d3d4d8" />
    <path d="M317 256L362 270L317 310Z" fill="#d3d4d8" />
    <path d="M168 280L183 276V348L168 344Z" fill="#e4e5e8" />
  </svg>
);

export default function App() {
  return (
    <Page>
      <Global />
      <TitleBar>
        <AppSlot>
          <AppButton aria-label="Application menu">
            <svg width="16" height="20" viewBox="0 0 16 20" aria-hidden="true">
              <path d="M0 14L5 0h4l6 14-5-2-3 1-4 1z" fill="#c8301c" />
              <path d="M5 9l2-5 2 5z" fill="#f3c4b4" />
              <path d="M9 0l6 14-4-2L7 0z" fill="#8c1a10" />
            </svg>
            <Caret />
          </AppButton>
        </AppSlot>
        <QuickAccess $w={311}>
          {["new", "open", "saveBlue", "saveAs", "print", "undoTop"].map((n) => (
            <Tool key={n} $w={19} aria-label={n}><Icon n={n} s={14} /></Tool>
          ))}
          <Tool $w={10} aria-label="Undo list"><Caret /></Tool>
          <Tool $w={19} aria-label="redo"><Icon n="redoTop" s={14} /></Tool>
          <Tool $w={10} aria-label="Redo list"><Caret /></Tool>
          <Workspace>
            <Icon n="gear" s={12} />
            <select aria-label="工作空间"><option>自定义</option></select>
            <Caret />
          </Workspace>
          <More $w={11} aria-label="Customize"><Caret $c="#111" /></More>
        </QuickAccess>
        <FileName>Drawing1.dwg</FileName>
        <Gray $w={12}><Tool aria-label="Expand"><svg width="6" height="8"><path d="M1 0l4 4-4 4z" fill="#111" /></svg></Tool></Gray>
        <Search aria-label="搜索" placeholder="键入关键字或短语" />
        <Account $w={199}>
          <Tool $w={20} aria-label="binoculars"><Icon n="binoc" s={14} /></Tool>
          <Tool $w={19} aria-label="user"><Icon n="user" s={13} /></Tool>
          <Sign>登录</Sign>
          <Tool $w={14} aria-label="Account list"><Caret /></Tool>
          <Tool $w={20} aria-label="Exchange"><Icon n="xmark" s={13} /></Tool>
          <Tool $w={18} aria-label="License"><Icon n="handLock" s={14} /></Tool>
          <Tool $w={10} aria-label="License list"><Caret /></Tool>
          <Tool $w={30} aria-label="Help"><Icon n="helpBlue" s={14} /></Tool>
          <Tool aria-label="Help list"><Caret /></Tool>
        </Account>
        <WinButtons>
          {["M0 3.500H8", "M.5 -2.500H7.500V5.500H.5z", "M0 -2L8 6M8 -2L0 6"].map((d) => (
            <button key={d} aria-label="Window control">
              <svg width="8" height="7" display="block"><path d={d} fill="none" stroke="#aaa" /></svg>
            </button>
          ))}
        </WinButtons>
      </TitleBar>

      <MenuBar>
        {menus.map((m) => <MenuItem key={m}>{m}</MenuItem>)}
        <Push />
        <svg width="28" height="10" viewBox="0 0 28 10" aria-hidden="true">
          <path d="M1 8h6M12.500 3.500h5v5h-5zM14.500 3V1.500h5v5H18M22 2l5 6M27 2l-5 6" fill="none" stroke="#1c1c1c" strokeWidth="1.200" />
        </svg>
      </MenuBar>

      <TabBar>
        <Tab>Drawing1*
          <svg width="7" height="7" aria-hidden="true"><path d="M1 1l5 5M6 1L1 6" stroke="#888" strokeWidth="1.500" /></svg>
        </Tab>
        <NewTab aria-label="New tab">+</NewTab>
      </TabBar>

      <ToolArea>
        <ToolRow>
          <Bar $w={403}><Tools list={rowOne} /></Bar>
          <Bar $w={372}>
            <Tool $w={13} aria-label="Text style"><Icon n="textStyle" s={13} /></Tool>
            <StyleCombo label="文字样式" value="Standard" pad={10} />
            <Sep />
            <Tool $w={16} aria-label="Dimension style"><Icon n="dimStyle" s={13} /></Tool>
            <StyleCombo label="标注样式" value="GC" pad={10} />
            <Sep />
            <Tool $w={14} aria-label="Table style"><Icon n="tableStyle" s={13} /></Tool>
            <StyleCombo label="表格样式" value="Standard" pad={0} />
            <Sep />
            <Tool $w={16} aria-label="Leader style"><Icon n="leader" s={13} /></Tool>
            <StyleCombo label="引线样式" value="Standard" pad={10} />
          </Bar>
          <Bar $w={349}><Tools list={rowOneRight} /></Bar>
        </ToolRow>
        <ToolRow>
          <Bar $w={139}>
            <Combo><Select aria-label="工作空间" $pad={3}><option>自定义</option></Select><Chevron /></Combo>
            <Tools list="gear save2" w={14} />
          </Bar>
          <Bar $w={246}>
            <Tools list="layers" w={14} />
            <Combo>
              <Icon n="bulb" s={11} /><Icon n="sun" s={11} /><Icon n="sunPage" s={10} /><Icon n="lock" s={11} />
              <Swatch />
              <Select aria-label="图层"><option>0</option></Select><Chevron />
            </Combo>
            <Tools list="layersB layerPrev layerState" w={14} />
          </Bar>
          <Bar $w={363}>
            <Combo $mono $g={95}><Swatch /><Select aria-label="颜色"><option>ByLayer</option></Select><Chevron /></Combo>
            <Sep />
            <Combo $mono $g={99}><Rule $w={38} /><Select aria-label="线型"><option>ByLayer</option></Select><Chevron /></Combo>
            <Sep />
            <Combo $mono $g={78}><Rule $w={22} /><Select aria-label="线宽"><option>ByLayer</option></Select><Chevron /></Combo>
            <Sep />
            <Combo $mono $dim $g={74}><Select aria-label="打印样式" disabled $pad={3}><option>ByColor</option></Select></Combo>
          </Bar>
          <Bar $w={305}><Tools list={rowTwoRight} /></Bar>
        </ToolRow>
      </ToolArea>

      <Main>
        <Palette>
          <PaletteHead>天正...</PaletteHead>
          {groups.map((g, i) => (
            <Group key={i} $h={g.h}>
              {g.items.map(([ic, t], k) => <PaletteEntry key={k} icon={ic} title={t} />)}
            </Group>
          ))}
          <Watermark>视频</Watermark>
        </Palette>

        <Side $w={21}>
          <Grip />
          <SideTools list={drawTools} />
          <Grip />
          <SideTools list={lampTools} />
          <CmdHandle>
            <Dots />
            <svg width="8" height="8" aria-hidden="true"><path d="M1 1l6 6M7 1L1 7" stroke="#fff" strokeWidth="1.500" /></svg>
            <Icon n="wrench" s={10} />
          </CmdHandle>
        </Side>

        <Centre>
          <View>
            <Canvas>
              <CadDrawing />
              <Tip>
                <p>小提示</p>
                <p>“编辑文字”命令快捷键</p>
                <p>“ED”（DDEDIT）</p>
              </Tip>
              <Drawing>
                <path d="M319 400l7-7M460 400l7-7M460 448l7-7" stroke="#12b57c" strokeWidth="4" />
              </Drawing>
              <Cube>
                <Face>上</Face>
                <Dir $x={25} $y={-11}>北</Dir>
                <Dir $x={-11} $y={24}>西</Dir>
                <Dir $x={61} $y={24}>东</Dir>
                <Dir $x={25} $y={61}>南</Dir>
              </Cube>
              <Wcs>WCS</Wcs>
              <NavBar>
                <Icon n="navWheel" s={14} /><Icon n="navHand" s={14} /><Icon n="navZoom" s={14} /><Icon n="navOrbit" s={14} /><Icon n="navFilm" s={14} />
              </NavBar>
            </Canvas>
            <VScroll>
              <svg width="8" height="12" aria-hidden="true"><path d="M1 8l3-3 3 3" fill="none" stroke="#444" strokeWidth="1.500" /></svg>
              <Thumb />
            </VScroll>
          </View>
          <HScroll>
            <svg width="6" height="8" aria-hidden="true"><path d="M5 1L2 4l3 3" fill="none" stroke="#444" /></svg>
          </HScroll>
          <History />
          <Command>
            <Icon n="prompt" s={12} />
            <Caret $c="#888" />
            <input aria-label="命令" defaultValue="ED" />
          </Command>

          <Popup>
            <ul>
              {options.map(([ic, t], i) => (
                <Option key={t} $on={i === 0}>
                  {ic ? <Icon n={ic} s={12} /> : <Blank $s={12} />}
                  {t}
                  {i === 0 && <><Push /><Icon n="helpBlue" s={15} /><Icon n="globeList" s={14} /></>}
                </Option>
              ))}
            </ul>
            <DimOption><Icon n="gearDark" s={12} />EDGEMODE</DimOption>
            <DimOption><Icon n="gradSw" s={12} />图案填充: GR_CURVED</DimOption>
            <PopupBar />
            <Pointer width="10" height="15" aria-hidden="true">
              <path d="M1.500 1v11l3-3 2 4 2-1-2-4h3z" fill="#fff" stroke="#333" />
            </Pointer>
          </Popup>
        </Centre>

        <SideRight $w={18}>
          <Grip />
          <SideTools list={modifyTools} />
          <Grip />
          <SideTools list={orderTools} />
        </SideRight>
      </Main>

      <Status>
        <Scale>比例 1:100 <Caret $c="#111" /></Scale>
        <Coords />
        {"cross makeBlk center dot link new new trim img cross joinH view palette section plus".split(" ").map((n, i) => (
          <StatusTool key={i} $on={i > 9 && i < 12} aria-label={n}><Icon n={n} s={12} /></StatusTool>
        ))}
      </Status>

      <Brand>
        <BrandMark />
        <BrandText>
          <strong>土木工程网</strong>
          <a href="#home">www.civilcn.com</a>
        </BrandText>
      </Brand>
    </Page>
  );
}
